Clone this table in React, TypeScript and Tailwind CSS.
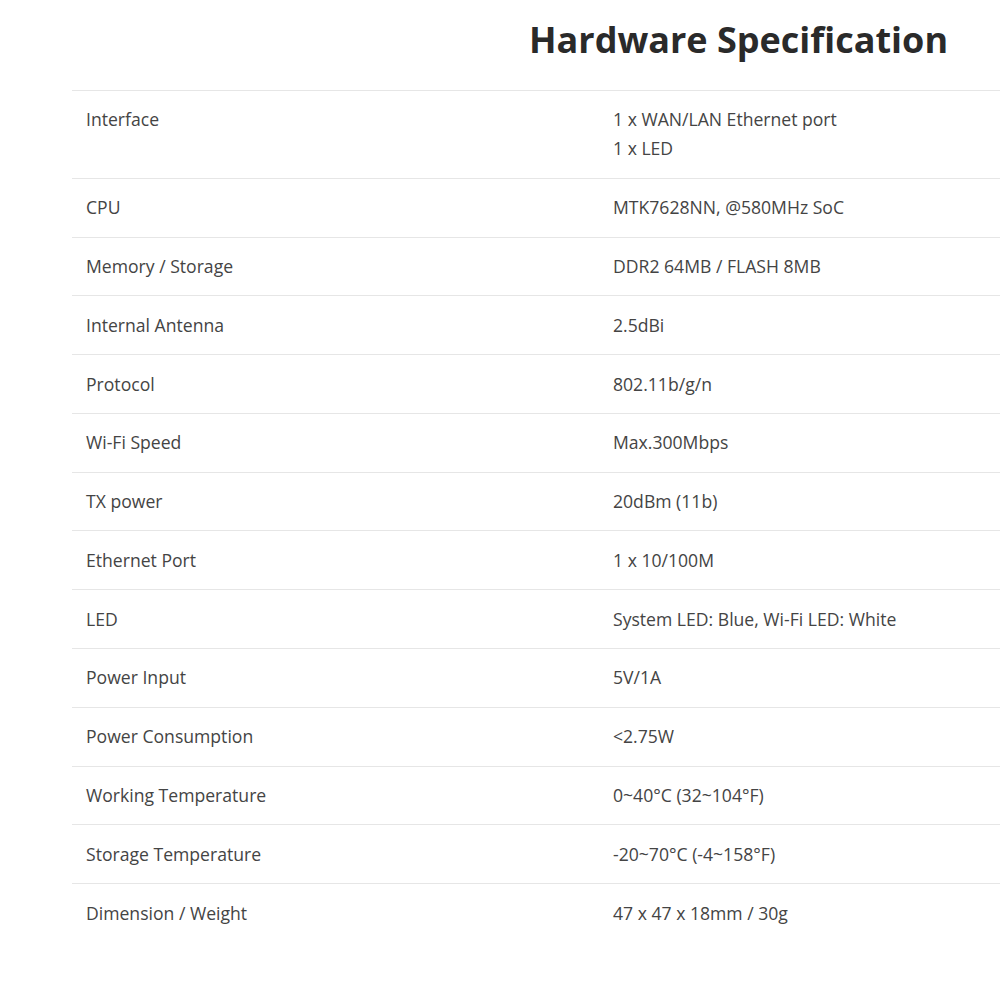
const specs: [string, string[]][] = [
  ['Interface', ['1 x WAN/LAN Ethernet port', '1 x LED']],
  ['CPU', ['MTK7628NN, @580MHz SoC']],
  ['Memory / Storage', ['DDR2 64MB / FLASH 8MB']],
  ['Internal Antenna', ['2.5dBi']],
  ['Protocol', ['802.11b/g/n']],
  ['Wi-Fi Speed', ['Max.300Mbps']],
  ['TX power', ['20dBm (11b)']],
  ['Ethernet Port', ['1 x 10/100M']],
  ['LED', ['System LED: Blue, Wi-Fi LED: White']],
  ['Power Input', ['5V/1A']],
  ['Power Consumption', ['<2.75W']],
  ['Working Temperature', ['0~40°C (32~104°F)']],
  ['Storage Temperature', ['-20~70°C (-4~158°F)']],
  ['Dimension / Weight', ['47 x 47 x 18mm / 30g']],
]

export default function App() {
  return (
    <div
      className="w-[1000px] h-[1000px] overflow-hidden bg-white"
      style={{ fontFamily: '"Open Sans", "Noto Sans", sans-serif' }}
    >
      <h1 className="ml-[529px] pt-[16px] h-[90px] text-[36px] leading-[48px] font-bold text-[#2a2a2a] whitespace-nowrap">
        Hardware Specification
      </h1>
      <div className="ml-[72px] w-[1054px]">
        {specs.map(([label, values]) => (
          <div
            key={label}
            className="grid grid-cols-2 border-t border-[#e6e6e6] py-[14.4px] text-[17.6px] leading-[29px] text-[#444]"
          >
            <div className="px-[14px]">{label}</div>
            <div className="px-[14px]">
              {values.map((v) => (
                <div key={v}>{v}</div>
              ))}
            </div>
          </div>
        ))}
      </div>
    </div>
  )
}
